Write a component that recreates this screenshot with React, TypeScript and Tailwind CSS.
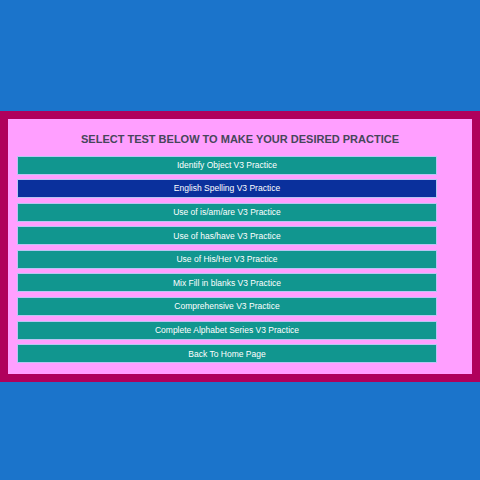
const tests = [
  { label: 'Identify Object V3 Practice' },
  { label: 'English Spelling V3 Practice', active: true },
  { label: 'Use of is/am/are V3 Practice' },
  { label: 'Use of has/have V3 Practice' },
  { label: 'Use of His/Her V3 Practice' },
  { label: 'Mix Fill in blanks V3 Practice' },
  { label: 'Comprehensive V3 Practice' },
  { label: 'Complete Alphabet Series V3 Practice' },
  { label: 'Back To Home Page' },
];

export default function App() {
  return (
    <div
      className="w-[480px] h-[480px] bg-[#1b74cb] pt-[111px]"
      style={{ fontFamily: '"Liberation Sans", Arial, sans-serif' }}
    >
      <div className="h-[271px] border-8 border-[#b0005c] bg-[#ff9fff] pt-[13px] pl-[9px] pr-[35px]">
        <h1 className="text-[11px] leading-[14px] font-bold text-[#46465a] text-center ml-[-9px] mr-[-35px]">
          SELECT TEST BELOW TO MAKE YOUR DESIRED PRACTICE
        </h1>
        <div className="mt-[9.5px] flex flex-col gap-[4.6px]">
          {tests.map((t) => (
            <button
              key={t.label}
              type="button"
              className={
                t.active
                  ? 'h-[19px] w-full border border-[#b9c4f2] bg-[#0a309c] text-white text-[8.5px] leading-none'
                  : 'h-[19px] w-full border border-[#b9c4f2] bg-[#11968f] text-white text-[8.5px] leading-none'
              }
            >
              {t.label}
            </button>
          ))}
        </div>
      </div>
    </div>
  );
}
